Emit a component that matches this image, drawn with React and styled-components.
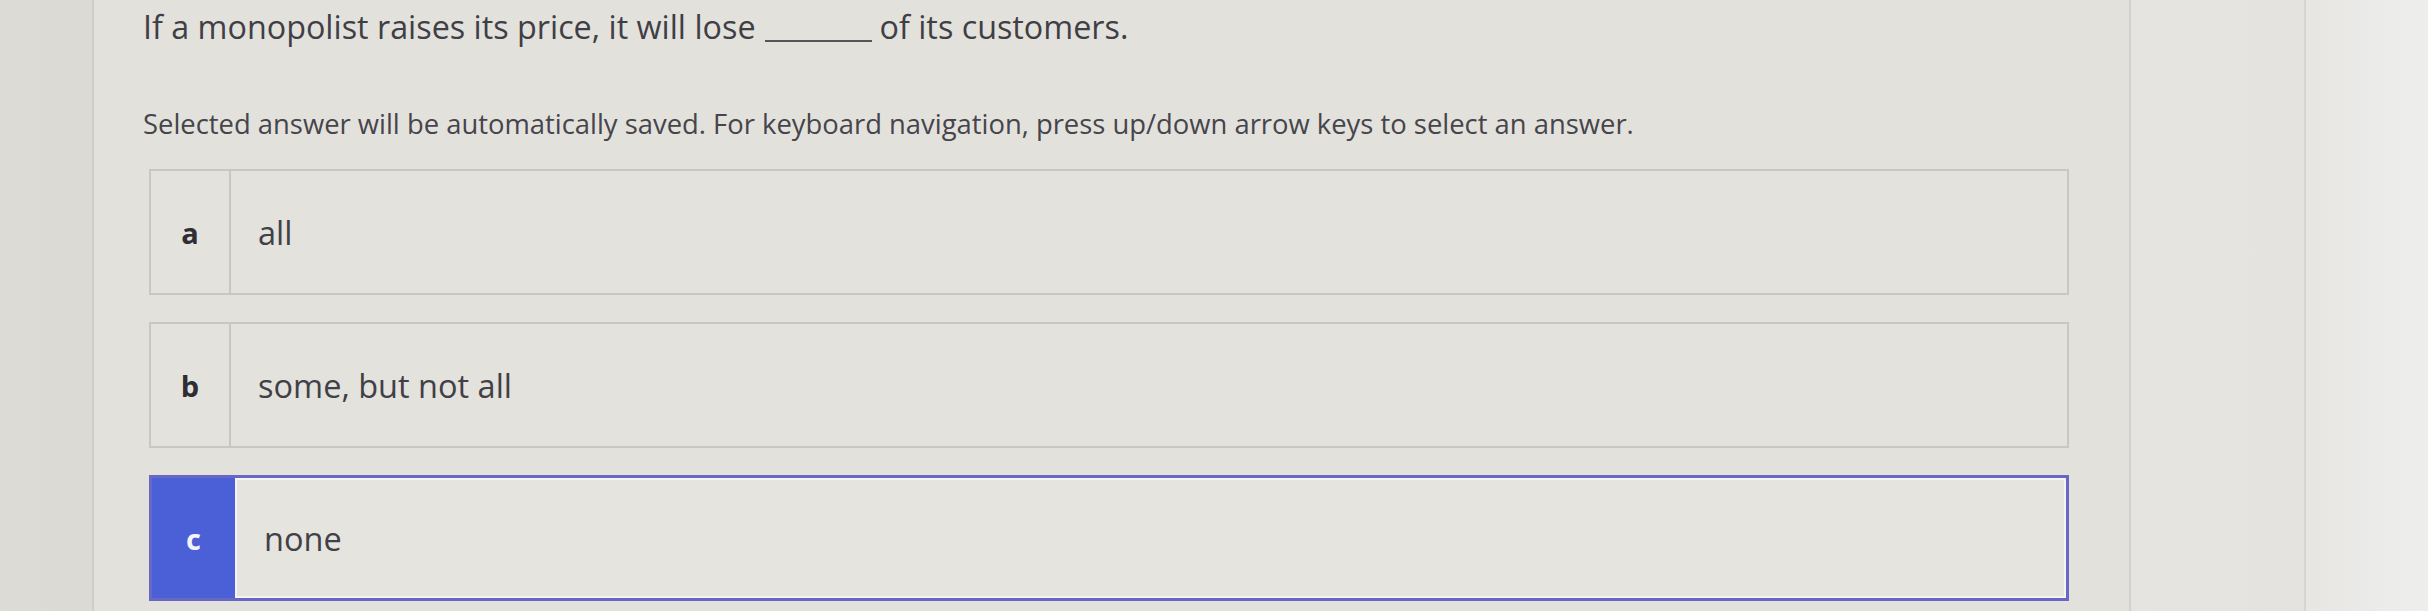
import React from "react";
import styled, { createGlobalStyle, css } from "styled-components";

const GlobalStyle = createGlobalStyle`
  html, body {
    margin: 0;
    padding: 0;
    background: #e2e0db;
  }
  body {
    font-family: "Open Sans", "Noto Sans", sans-serif;
    -webkit-font-smoothing: antialiased;
  }
`;

const Screen = styled.div`
  display: flex;
  width: 2428px;
  height: 611px;
  overflow: hidden;
  background: #e2e0db;
`;

const Gutter = styled.div`
  flex: 0 0 92px;
  background: linear-gradient(90deg, #dddbd6 0%, #dcdad5 100%);
  border-right: 2px solid #d0cec9;
`;

const Main = styled.main`
  flex: 0 0 2037px;
  box-sizing: border-box;
  padding: 6px 0 0 49px;
  background: #e3e1dc;
  border-right: 2px solid #d3d1cc;
`;

const Question = styled.p`
  margin: 0;
  font-size: 32.3px;
  line-height: 40px;
  color: #3f3f45;
`;

const Blank = styled.span`
  display: inline-block;
  width: 107px;
  margin: 0 8px 0 9px;
  border-bottom: 2px solid #55555a;
  vertical-align: -3px;
`;

const Instructions = styled.p`
  margin: 60px 0 0 0;
  font-size: 27.4px;
  line-height: 36px;
  color: #45454b;
`;

const Options = styled.div`
  display: flex;
  flex-direction: column;
  gap: 27px;
  margin: 27px 60px 0 6px;
`;

const Option = styled.div`
  display: flex;
  height: 126px;
  box-sizing: border-box;
  border: 2px solid #c9c7c2;
  background: #e4e2dd;

  ${(p) =>
    p.$selected &&
    css`
      border: 3px solid #6867c3;
      background: #e6e4df;
    `}
`;

const Letter = styled.div`
  flex: 0 0 ${(p) => (p.$selected ? "83px" : "78px")};
  display: flex;
  align-items: center;
  justify-content: center;
  border-right: 2px solid ${(p) => (p.$selected ? "#f4f4f7" : "#c9c7c2")};
  background: ${(p) => (p.$selected ? "#4b5fd6" : "transparent")};
  color: ${(p) => (p.$selected ? "#f4f5fb" : "#2e2e34")};
  font-size: 29px;
  font-weight: 700;
`;

const Answer = styled.div`
  flex: 1;
  display: flex;
  align-items: center;
  padding-left: 27px;
  font-size: 32.5px;
  color: #404046;
  ${(p) =>
    p.$selected &&
    css`
      box-shadow: inset 0 2px 0 #f4f4f7, inset -2px 0 0 #f4f4f7,
        inset 0 -2px 0 #f4f4f7;
    `}
`;

const SideRail = styled.div`
  flex: 0 0 173px;
  background: linear-gradient(90deg, #e5e4e0 0%, #e4e3df 100%);
  border-right: 2px solid #d6d5d1;
`;

const EdgeRail = styled.div`
  flex: 1;
  background: linear-gradient(90deg, #e7e6e3 0%, #ebebe9 60%, #eeeeed 100%);
`;

const answers = [
  { key: "a", text: "all" },
  { key: "b", text: "some, but not all" },
  { key: "c", text: "none", selected: true },
];

export default function App() {
  return (
    <>
      <GlobalStyle />
      <Screen>
        <Gutter />
        <Main>
          <Question>
            If a monopolist raises its price, it will lose
            <Blank />
            of its customers.
          </Question>
          <Instructions>
            Selected answer will be automatically saved. For keyboard
            navigation, press up/down arrow keys to select an answer.
          </Instructions>
          <Options role="radiogroup">
            {answers.map((a) => (
              <Option
                key={a.key}
                role="radio"
                aria-checked={!!a.selected}
                $selected={a.selected}
              >
                <Letter $selected={a.selected}>{a.key}</Letter>
                <Answer $selected={a.selected}>{a.text}</Answer>
              </Option>
            ))}
          </Options>
        </Main>
        <SideRail />
        <EdgeRail />
      </Screen>
    </>
  );
}
